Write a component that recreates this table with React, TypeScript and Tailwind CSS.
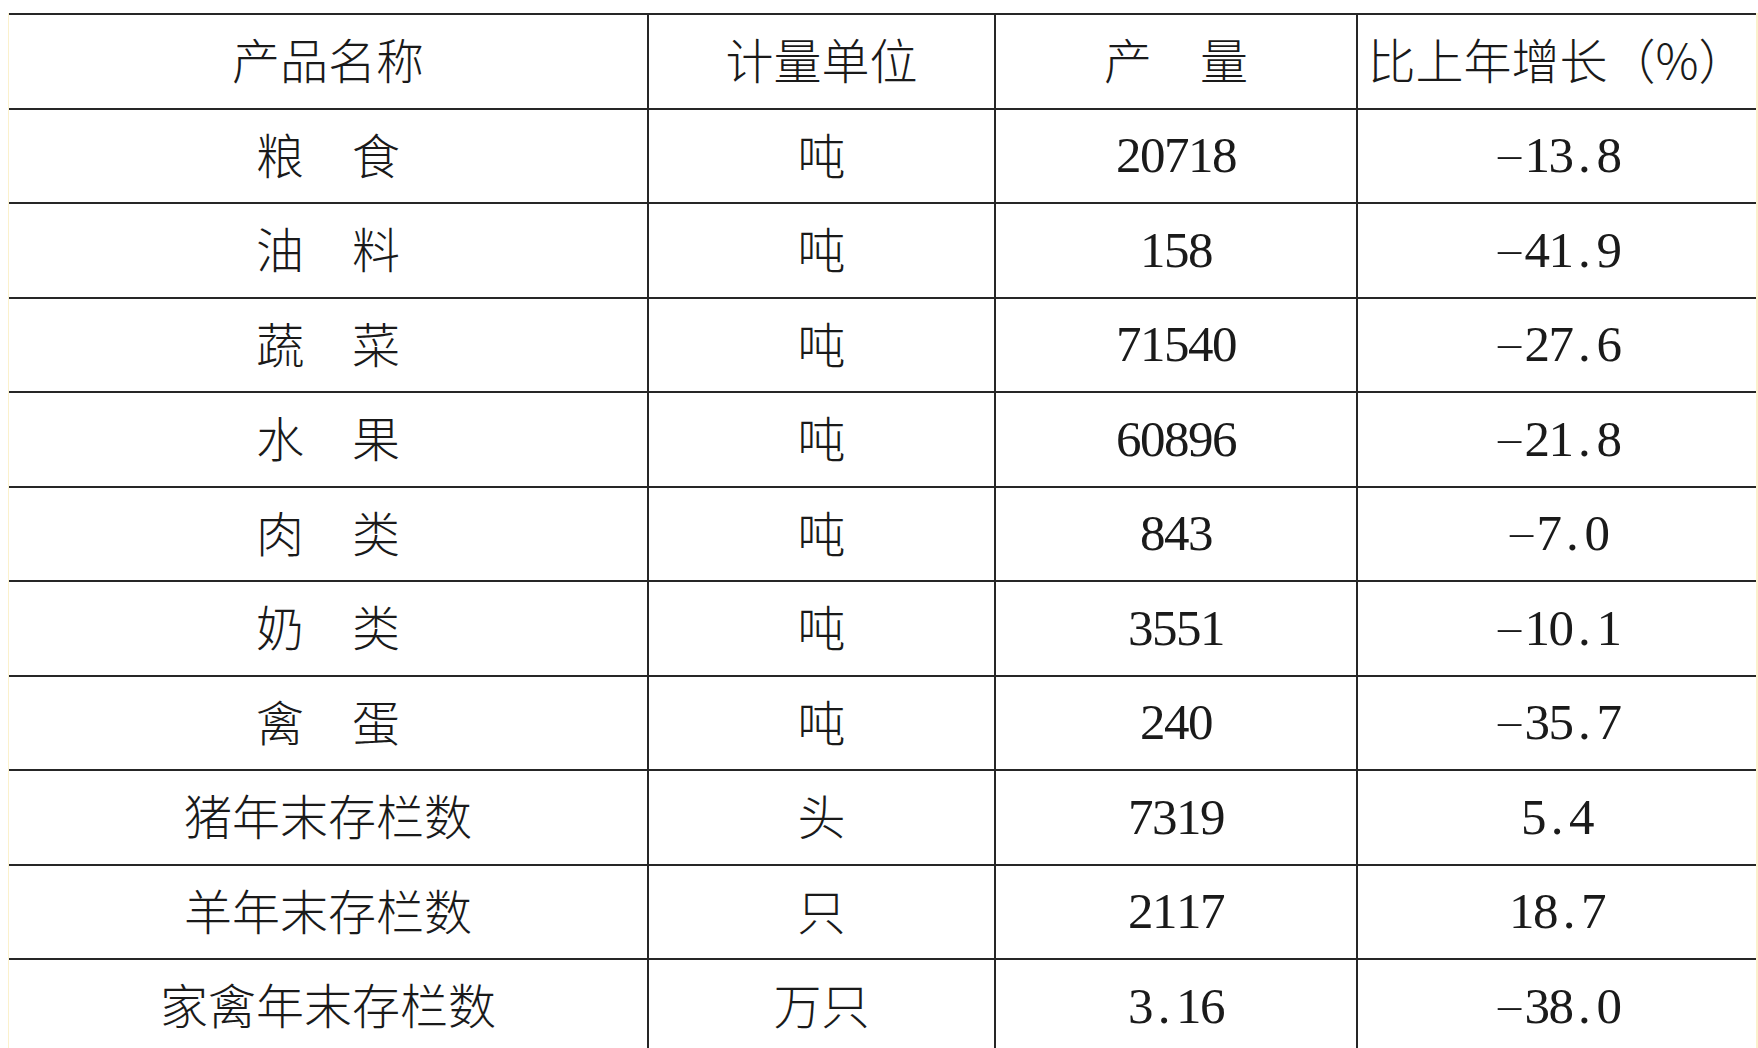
import React from "react"

interface Row {
  name: string
  unit: string
  output: string
  growth: string
}

const rows: Row[] = [
  { name: "粮　食", unit: "吨", output: "20718", growth: "-13.8" },
  { name: "油　料", unit: "吨", output: "158", growth: "-41.9" },
  { name: "蔬　菜", unit: "吨", output: "71540", growth: "-27.6" },
  { name: "水　果", unit: "吨", output: "60896", growth: "-21.8" },
  { name: "肉　类", unit: "吨", output: "843", growth: "-7.0" },
  { name: "奶　类", unit: "吨", output: "3551", growth: "-10.1" },
  { name: "禽　蛋", unit: "吨", output: "240", growth: "-35.7" },
  { name: "猪年末存栏数", unit: "头", output: "7319", growth: "5.4" },
  { name: "羊年末存栏数", unit: "只", output: "2117", growth: "18.7" },
  { name: "家禽年末存栏数", unit: "万只", output: "3.16", growth: "-38.0" },
]

// digits are set half-width, one box per character, like the printed table
function Num({ value }: { value: string }) {
  return (
    <span className="font-['Liberation_Serif',serif] text-[51px] leading-none">
      {value.split("").map((c, i) =>
        c === "-" ? (
          <span key={i} className="inline-block mx-[7px] scale-x-[1.8] scale-y-[0.5]">
            -
          </span>
        ) : (
          <span key={i} className="inline-block w-[24px] text-center">
            {c}
          </span>
        )
      )}
    </span>
  )
}

function Cell({ children, className = "" }: { children: React.ReactNode; className?: string }) {
  return <div className={`flex items-center justify-center h-full ${className}`}>{children}</div>
}

export default function App() {
  const cjk = "font-['Noto_Sans_CJK_SC',sans-serif] font-light text-[48px] leading-none pb-[6px]"

  return (
    <div className="w-[1758px] h-[1048px] overflow-hidden bg-white text-[#1a1a1a] pt-[13px] pl-[8px]">
      <div className="border-l border-r-2 border-[#fbf1cc] h-full">
        {/* header */}
        <div className="flex h-[94.5px] border-t-2 border-[#262626]">
          <Cell className={`w-[638px] ${cjk}`}>产品名称</Cell>
          <Cell className={`w-[347px] border-l-2 border-[#262626] ${cjk}`}>计量单位</Cell>
          <Cell className={`w-[362px] border-l-2 border-[#262626] ${cjk}`}>产　量</Cell>
          <Cell className={`flex-1 border-l-2 border-[#262626] ${cjk}`}>比上年增长（%）</Cell>
        </div>

        {rows.map((r) => (
          <div key={r.name} className="flex h-[94.5px] border-t-2 border-[#262626]">
            <Cell className={`w-[638px] ${cjk}`}>{r.name}</Cell>
            <Cell className={`w-[347px] border-l-2 border-[#262626] ${cjk}`}>{r.unit}</Cell>
            <Cell className="w-[362px] border-l-2 border-[#262626]">
              <Num value={r.output} />
            </Cell>
            <Cell className="flex-1 border-l-2 border-[#262626]">
              <Num value={r.growth} />
            </Cell>
          </div>
        ))}
      </div>
    </div>
  )
}
